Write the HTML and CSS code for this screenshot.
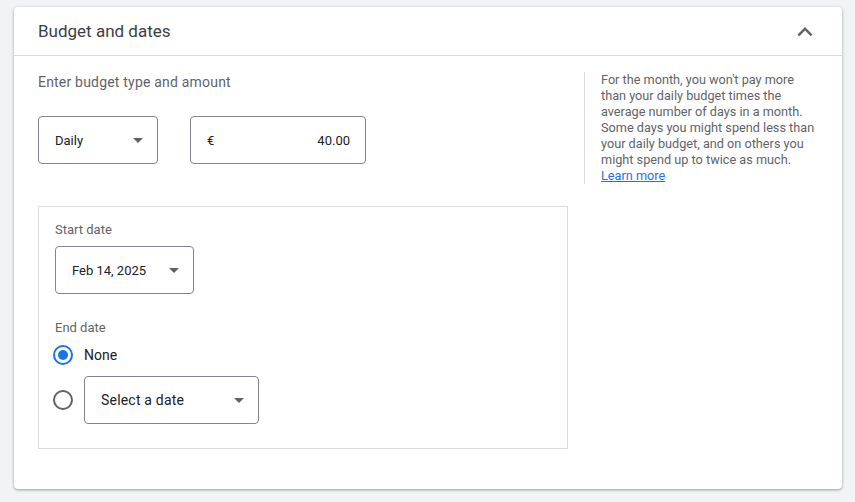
FILE: index.html
```html
<html>

<head>
    <link rel="stylesheet" href="styles.css">
</head>

<body>

    <div class="card">
        <div class="card-header">
            <span class="card-title">Budget and dates</span>
            <svg class="chevron" width="24" height="24" viewBox="0 0 24 24">
                <path d="M7.41 15.41L12 10.83l4.59 4.58L18 14l-6-6-6 6z" fill="#5f6368" />
            </svg>
        </div>

        <div class="card-body">
            <div class="main-col">
                <div class="section-label">Enter budget type and amount</div>

                <div class="budget-row">
                    <div class="select select-daily">
                        <span>Daily</span>
                        <span class="arrow"></span>
                    </div>
                    <div class="amount">
                        <span>€</span>
                        <span>40.00</span>
                    </div>
                </div>

                <div class="dates-box">
                    <div class="field-label">Start date</div>
                    <div class="select select-start">
                        <span>Feb 14, 2025</span>
                        <span class="arrow"></span>
                    </div>

                    <div class="field-label end-label">End date</div>
                    <div class="radio-row none-row">
                        <span class="radio checked"></span>
                        <span class="radio-text">None</span>
                    </div>
                    <div class="radio-row date-row">
                        <span class="radio"></span>
                        <div class="select select-end">
                            <span>Select a date</span>
                            <span class="arrow"></span>
                        </div>
                    </div>
                </div>
            </div>

            <div class="help-col">
                For the month, you won't pay more than your daily budget times the average number of days in a month. Some days you might spend less than your daily budget, and on others you might spend up to twice as much.
                <a href="#">Learn more</a>
            </div>
        </div>
    </div>

</body>

</html>
```

FILE: styles.css
```css
body {
    font-family: Roboto, "Liberation Sans", sans-serif;
    margin: 0;
    padding: 7px 13px 13px 14px;
    background-color: #f1f3f4;
    color: #3c4043;
}

.card {
    background-color: white;
    border-radius: 4px;
    box-shadow: 0 1px 2px rgba(60, 64, 67, 0.3), 0 1px 3px 1px rgba(60, 64, 67, 0.15);
    height: 482px;
}

.card-header {
    height: 48px;
    border-bottom: 1px solid #dadce0;
    display: flex;
    align-items: center;
    justify-content: space-between;
    padding: 0 22px 0 24px;
}

.card-title {
    font-size: 17px;
}

.chevron {
    width: 30px;
    height: 30px;
    margin-top: 1px;
}

.card-body {
    display: flex;
    padding: 16px 24px 0 24px;
}

.main-col {
    width: 530px;
    flex-shrink: 0;
}

.section-label {
    font-size: 14px;
    line-height: 20px;
    letter-spacing: 0.2px;
    color: #5f6368;
}

.budget-row {
    display: flex;
    gap: 32px;
    margin-top: 24px;
}

.select, .amount {
    height: 46px;
    border: 1px solid #80868b;
    border-radius: 4px;
    display: flex;
    align-items: center;
    justify-content: space-between;
    padding: 0 14px 0 16px;
    font-size: 13px;
    color: #202124;
    flex-shrink: 0;
}

.arrow {
    width: 0;
    height: 0;
    border-left: 5px solid transparent;
    border-right: 5px solid transparent;
    border-top: 5px solid #5f6368;
}

.select-daily {
    width: 88px;
}

.amount {
    width: 143px;
    padding-right: 15px;
}

.dates-box {
    margin-top: 42px;
    border: 1px solid #dadce0;
    padding: 15px 16px 24px 16px;
}

.field-label {
    font-size: 13px;
    line-height: 16px;
    color: #5f6368;
}

.select-start {
    width: 107px;
    margin-top: 8px;
}

.end-label {
    margin-top: 26px;
}

.radio-row {
    display: flex;
    align-items: center;
    gap: 11px;
    margin-left: -2px;
}

.none-row {
    margin-top: 8px;
    height: 22px;
}

.date-row {
    margin-top: 10px;
}

.radio {
    width: 16px;
    height: 16px;
    border: 2px solid #5f6368;
    border-radius: 50%;
    display: flex;
    align-items: center;
    justify-content: center;
    flex-shrink: 0;
}

.radio.checked {
    border-color: #1a73e8;
}

.radio.checked::after {
    content: "";
    width: 10px;
    height: 10px;
    border-radius: 50%;
    background-color: #1a73e8;
}

.radio-text {
    font-size: 14px;
    color: #202124;
}

.select-end {
    width: 143px;
    font-size: 14px;
    letter-spacing: 0.2px;
}

.help-col {
    margin-left: 16px;
    border-left: 1px solid #dadce0;
    padding: 0 0 0 16px;
    font-size: 12.7px;
    line-height: 16px;
    color: #5f6368;
    width: 220px;
    align-self: flex-start;
}

.help-col a {
    display: block;
    color: #1a73e8;
}
```
